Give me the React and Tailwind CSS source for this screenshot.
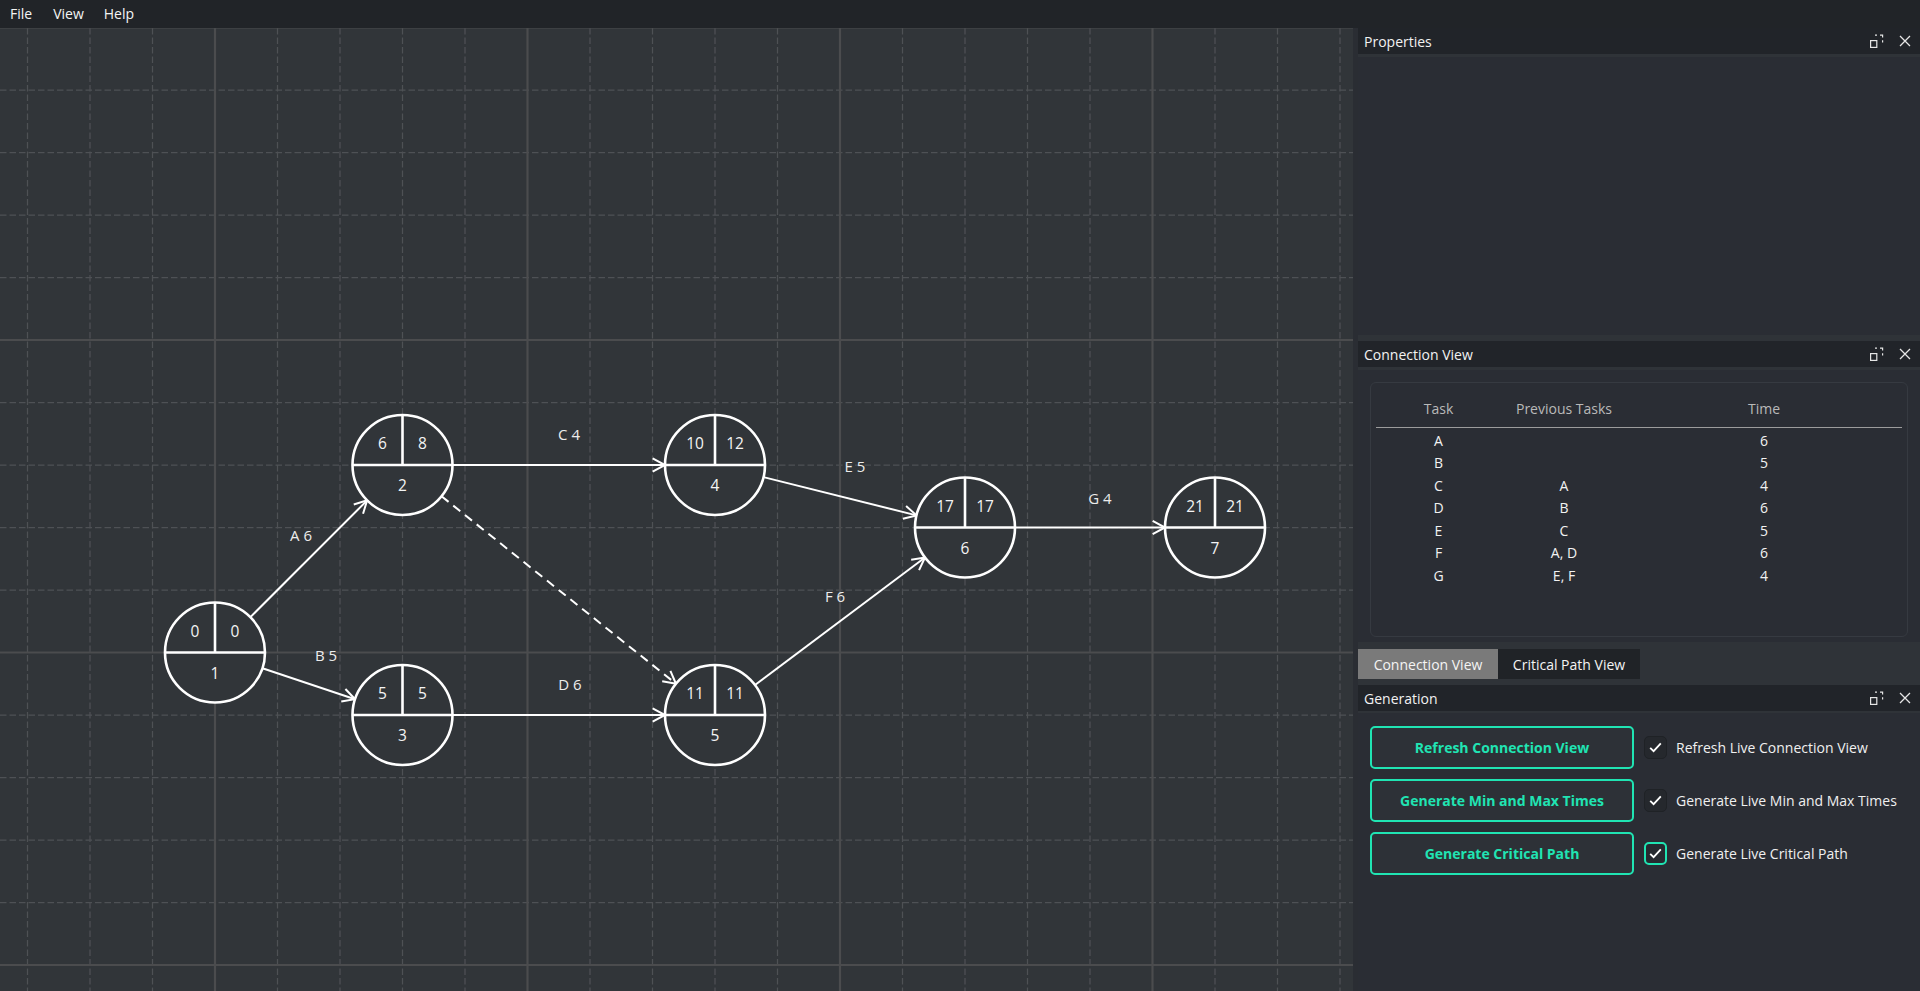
import React from 'react';

const STEP = 62.5;
const OX = 215;
const OY = 652.5;
const R = 50;

const nodes = {
  1: { x: OX, y: OY, es: 0, lf: 0 },
  2: { x: OX + 3 * STEP, y: OY - 3 * STEP, es: 6, lf: 8 },
  3: { x: OX + 3 * STEP, y: OY + STEP, es: 5, lf: 5 },
  4: { x: OX + 8 * STEP, y: OY - 3 * STEP, es: 10, lf: 12 },
  5: { x: OX + 8 * STEP, y: OY + STEP, es: 11, lf: 11 },
  6: { x: OX + 12 * STEP, y: OY - 2 * STEP, es: 17, lf: 17 },
  7: { x: OX + 16 * STEP, y: OY - 2 * STEP, es: 21, lf: 21 },
};

const edges = [
  { from: 1, to: 2, label: 'A 6', lx: 301, ly: 535 },
  { from: 1, to: 3, label: 'B 5', lx: 326, ly: 655 },
  { from: 2, to: 4, label: 'C 4', lx: 569, ly: 434 },
  { from: 3, to: 5, label: 'D 6', lx: 570, ly: 684 },
  { from: 4, to: 6, label: 'E 5', lx: 855, ly: 466 },
  { from: 5, to: 6, label: 'F 6', lx: 835, ly: 596 },
  { from: 6, to: 7, label: 'G 4', lx: 1100, ly: 498 },
  { from: 2, to: 5, dashed: true },
];

const tasks = [
  ['A', '', 6],
  ['B', '', 5],
  ['C', 'A', 4],
  ['D', 'B', 6],
  ['E', 'C', 5],
  ['F', 'A, D', 6],
  ['G', 'E, F', 4],
];

const CANVAS_W = 1353;
const TOP = 28;
const FONT = '"Open Sans", "Noto Sans", sans-serif';

function Grid() {
  const minor = [];
  const major = [];
  for (let k = -4; k <= 18; k++) {
    const x = OX + k * STEP;
    if (x < 0 || x > CANVAS_W) continue;
    const l = <line key={'v' + k} x1={x} y1={TOP} x2={x} y2={991} />;
    (k % 5 === 0 ? major : minor).push(l);
  }
  for (let k = -10; k <= 5; k++) {
    const y = OY + k * STEP;
    if (y < TOP - 2 || y > 991) continue;
    const l = <line key={'h' + k} x1={0} y1={y} x2={CANVAS_W} y2={y} />;
    (k % 5 === 0 ? major : minor).push(l);
  }
  return (
    <g>
      <g stroke="#4e5155" strokeWidth="1.25" strokeDasharray="6.5 3">{minor}</g>
      <g stroke="#4b4c4e" strokeWidth="2.2">{major}</g>
    </g>
  );
}

function Edge({ e }) {
  const a = nodes[e.from];
  const b = nodes[e.to];
  const dx = b.x - a.x;
  const dy = b.y - a.y;
  const len = Math.hypot(dx, dy);
  const ux = dx / len;
  const uy = dy / len;
  const sx = a.x + ux * R;
  const sy = a.y + uy * R;
  const tx = b.x - ux * R;
  const ty = b.y - uy * R;
  const L = 14;
  const ang = (28 * Math.PI) / 180;
  const wing = (s) => {
    const c = Math.cos(s * ang);
    const n = Math.sin(s * ang);
    const rx = ux * c - uy * n;
    const ry = ux * n + uy * c;
    return `${tx - rx * L},${ty - ry * L}`;
  };
  return (
    <g>
      <line
        x1={sx}
        y1={sy}
        x2={tx}
        y2={ty}
        stroke="#ffffff"
        strokeWidth="2"
        strokeDasharray={e.dashed ? '9 6' : undefined}
      />
      <polyline
        points={`${wing(1)} ${tx},${ty} ${wing(-1)}`}
        fill="none"
        stroke="#ffffff"
        strokeWidth="2"
      />
      {e.label && (
        <text
          x={e.lx}
          y={e.ly}
          textAnchor="middle"
          dominantBaseline="central"
          fill="#ececec"
          fontSize="15"
          fontFamily={FONT}
        >
          {e.label}
        </text>
      )}
    </g>
  );
}

function Node({ id, n }) {
  return (
    <g>
      <circle cx={n.x} cy={n.y} r={R} fill="#313539" stroke="#ffffff" strokeWidth="2.6" />
      <line x1={n.x - R} y1={n.y} x2={n.x + R} y2={n.y} stroke="#ffffff" strokeWidth="2.6" />
      <line x1={n.x} y1={n.y - R} x2={n.x} y2={n.y} stroke="#ffffff" strokeWidth="2.6" />
      <g fill="#f4f4f4" fontSize="15.5" fontFamily={FONT} textAnchor="middle" dominantBaseline="central">
        <text x={n.x - 20} y={n.y - 22}>{n.es}</text>
        <text x={n.x + 20} y={n.y - 22}>{n.lf}</text>
        <text x={n.x} y={n.y + 20}>{id}</text>
      </g>
    </g>
  );
}

function FloatIcon() {
  return (
    <svg width="14" height="14" viewBox="0 0 14 14" fill="none" stroke="#e6e6e6" strokeWidth="1.2">
      <rect x="0.6" y="6.6" width="6.2" height="6.8" />
      <path d="M5 1.2h2 M10 1.2h2.6v2.4 M12.6 6.2v2.2" />
    </svg>
  );
}

function CloseIcon() {
  return (
    <svg width="12" height="12" viewBox="0 0 12 12" fill="none" stroke="#e6e6e6" strokeWidth="1.3">
      <path d="M1 1L11 11M11 1L1 11" />
    </svg>
  );
}

function PanelHeader({ title }) {
  return (
    <div className="h-[26px] shrink-0 bg-[#212429] flex items-center pl-[6px] pr-[9px] text-[14px] text-[#f2f2f2]">
      <span className="flex-1 pt-[1px]">{title}</span>
      <span className="flex items-center gap-[15px]">
        <FloatIcon />
        <CloseIcon />
      </span>
    </div>
  );
}

function Check({ accent }) {
  return (
    <div
      className={
        accent
          ? 'w-[23px] h-[23px] rounded-[5px] border-2 border-[#20e4b3] bg-[#262a30] flex items-center justify-center'
          : 'w-[23px] h-[23px] rounded-[5px] border border-[#1f2226] bg-[#25282d] flex items-center justify-center'
      }
    >
      <svg width="13" height="11" viewBox="0 0 13 11" fill="none" stroke="#ffffff" strokeWidth="1.8">
        <path d="M1.2 5.8L4.6 9.2L11.8 1.4" />
      </svg>
    </div>
  );
}

const actions = [
  ['Refresh Connection View', 'Refresh Live Connection View', false],
  ['Generate Min and Max Times', 'Generate Live Min and Max Times', false],
  ['Generate Critical Path', 'Generate Live Critical Path', true],
];

export default function App() {
  return (
    <div
      className="w-[1920px] h-[991px] flex flex-col overflow-hidden bg-[#2f3338] text-white"
      style={{ fontFamily: FONT }}
    >
      {/* Menu bar */}
      <div className="h-[28px] shrink-0 bg-[#212428] flex items-center text-[14px] text-[#f4f4f4] pb-[1px]">
        <span className="pl-[10px] pr-[11px]">File</span>
        <span className="px-[10px]">View</span>
        <span className="px-[10px]">Help</span>
      </div>

      <div className="flex-1 flex min-h-0">
        {/* Canvas */}
        <div className="w-[1353px] shrink-0 bg-[#313539] overflow-hidden">
          <svg width={CANVAS_W} height={963} viewBox={`0 ${TOP} ${CANVAS_W} 963`} className="block">
            <Grid />
            {edges.map((e, i) => (
              <Edge key={i} e={e} />
            ))}
            {Object.entries(nodes).map(([id, n]) => (
              <Node key={id} id={id} n={n} />
            ))}
          </svg>
        </div>

        <div className="w-[5px] shrink-0 bg-[#2a2d33]" />

        {/* Dock */}
        <div className="flex-1 flex flex-col bg-[#2f3338]">
          <PanelHeader title="Properties" />
          <div className="mt-[3px] h-[278px] shrink-0 bg-[#2a2d34]" />

          <div className="mt-[6px]">
            <PanelHeader title="Connection View" />
          </div>
          <div className="mt-[3px] h-[272px] shrink-0 bg-[#2a2d34] pt-[12px] px-[12px] pb-[5px]">
            <div className="h-full rounded-[6px] border border-[#363a41] bg-[#2a2d34] pl-[5px] pr-[5px] text-[14px]">
              <div className="grid grid-cols-[125px_126px_274px] pt-[14px] pb-[6px] border-b border-[#9c9c9c] text-[#b9b9b9]">
                <span className="text-center leading-[24px]">Task</span>
                <span className="text-center leading-[24px]">Previous Tasks</span>
                <span className="text-center leading-[24px]">Time</span>
              </div>
              <div className="pt-[1px]">
                {tasks.map(([t, p, time]) => (
                  <div key={t} className="grid grid-cols-[125px_126px_274px] h-[22.5px] items-center text-[#f2f2f2]">
                    <span className="text-center">{t}</span>
                    <span className="text-center">{p}</span>
                    <span className="text-center">{time}</span>
                  </div>
                ))}
              </div>
            </div>
          </div>

          {/* Tabs */}
          <div className="mt-[7px] h-[30px] shrink-0 flex text-[14px] text-[#f4f4f4]">
            <div className="w-[140px] bg-[#7a7a7a] flex items-center justify-center">Connection View</div>
            <div className="w-[142px] bg-[#202327] flex items-center justify-center">Critical Path View</div>
          </div>

          <div className="mt-[6px]">
            <PanelHeader title="Generation" />
          </div>
          <div className="mt-[2px] flex-1 bg-[#2a2d34] pt-[13px] pl-[12px]">
            <div className="flex flex-col gap-[10px]">
              {actions.map(([btn, label, accent]) => (
                <div key={btn} className="flex items-center">
                  <button className="w-[264px] h-[43px] rounded-[5px] border-2 border-[#20e4b3] bg-[#2d3137] text-[#20e4b3] text-[14px] font-bold">
                    {btn}
                  </button>
                  <div className="ml-[10px]">
                    <Check accent={accent} />
                  </div>
                  <span className="ml-[9px] text-[14px] text-[#f0f0f0]">{label}</span>
                </div>
              ))}
            </div>
          </div>
        </div>
      </div>
    </div>
  );
}
